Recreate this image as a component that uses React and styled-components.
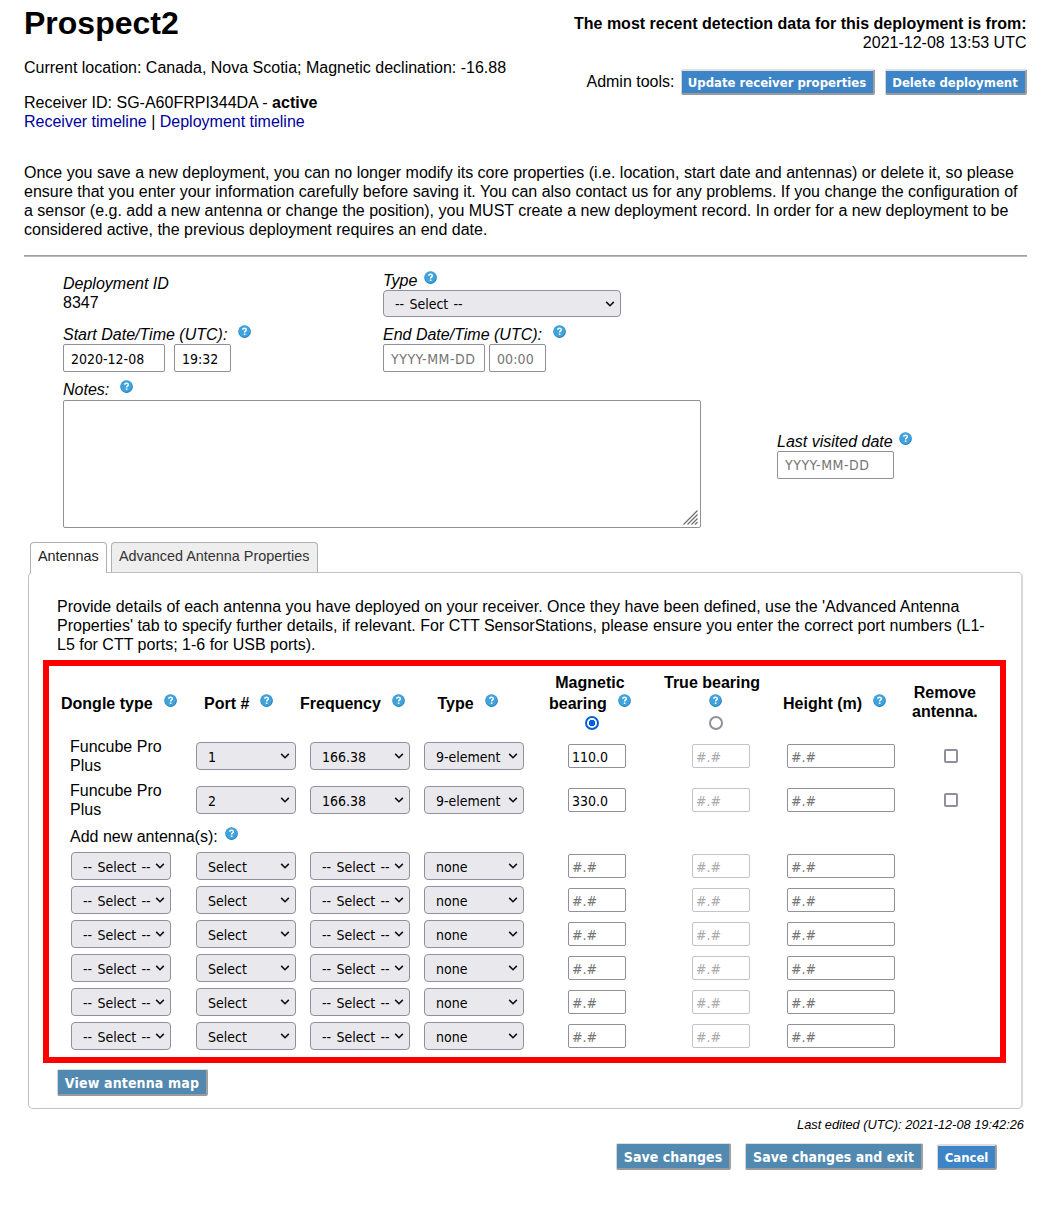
import React from "react";
import styled, { createGlobalStyle, css } from "styled-components";

const GlobalStyle = createGlobalStyle`
  * { box-sizing: border-box; }
  body {
    margin: 0;
    background: #fff;
    color: #000;
    font: 16px/19px "Liberation Sans", Arial, sans-serif;
  }
`;

const uiFont = css`
  font-family: "DejaVu Sans Condensed", "DejaVu Sans", Tahoma, sans-serif;
  font-stretch: condensed;
`;

const Page = styled.main`
  width: 1051px;
  height: 1211px;
  padding: 0 24px;
  overflow: hidden;
`;

const Header = styled.header`
  display: flex;
  justify-content: space-between;
  height: 163px;
  white-space: nowrap;
`;

const Title = styled.h1`
  margin: 5px 0 17px;
  font-size: 32px;
  line-height: 36px;
`;

const Line = styled.div`
  margin-bottom: ${(p) => p.$gap || 0}px;
`;

const Link = styled.a`
  color: #00009c;
  text-decoration: none;
`;

const Status = styled.div`
  display: flex;
  flex-direction: column;
  align-items: flex-end;
  padding: 14px 0.5px 0 0;
`;

const Tools = styled.div`
  display: flex;
  gap: 10px;
  margin-top: 17px;
`;

const ToolsLabel = styled.span`
  margin: 3px -4px 0 0;
`;

const Button = styled.button`
  ${uiFont}
  width: ${(p) => p.$w}px;
  height: ${(p) => (p.$small ? 26 : 27)}px;
  padding: ${(p) => (p.$small ? "1px 0 0" : "1px 0 0")};
  border: solid;
  border-width: ${(p) => (p.$small ? 2 : 1)}px 2px 2px 1px;
  border-color: #dedede #9f9f9f #9a9a9a #d4d4d4;
  border-radius: 2px;
  background: ${(p) => (p.$small ? "#3d85c6" : "#5289b0")};
  color: #fff;
  font-size: ${(p) => (p.$small ? 13 : 14)}px;
  font-weight: bold;
  line-height: 20px;
  letter-spacing: ${(p) => p.$ls || 0}px;
  white-space: nowrap;
`;

const Notice = styled.p`
  margin: 0;
  white-space: nowrap;
`;

const Rule = styled.hr`
  height: 2px;
  margin: 16px 0 0;
  border: 0;
  border-top: 1px solid #a0a0a0;
  border-bottom: 1px solid #b8b8b8;
`;

const Form = styled.section`
  display: grid;
  grid-template-columns: 320px 394px 1fr;
  grid-template-rows: 54px 55px 148px;
  height: 285px;
  padding: 14px 0 0 39px;
`;

const Field = styled.div`
  grid-column: ${(p) => p.$col || "auto"};
  padding-top: ${(p) => p.$top || 0}px;
`;

const Label = styled.label`
  display: flex;
  height: 19px;
  font-style: italic;
  white-space: nowrap;
`;

const Inputs = styled.div`
  display: flex;
  gap: ${(p) => p.$gap}px;
`;

const Input = styled.input`
  ${uiFont}
  width: ${(p) => p.$w}px;
  height: ${(p) => (p.$compact ? 24 : 28)}px;
  margin: 0;
  padding: ${(p) => (p.$raised ? 0 : 2)}px ${(p) => (p.$compact ? 3 : 7)}px 0;
  border: 1px solid #8f8f9d;
  border-radius: 2px;
  background: #fff;
  color: #000;
  font-size: 14px;
  letter-spacing: ${(p) => p.$ls || 0}px;
  &::placeholder { color: #757575; opacity: 1; }
  &:disabled { border-color: #c3c3cb; }
  &:disabled::placeholder { color: #ababab; }
`;

const SelectBox = styled.span`
  display: flex;
  align-items: center;
  width: ${(p) => p.$w}px;
  height: ${(p) => p.$h}px;
`;

const NativeSelect = styled.select`
  ${uiFont}
  flex: none;
  width: 100%;
  height: 100%;
  margin: 0;
  padding: 1px 0 0 11px;
  appearance: none;
  border: 1px solid #8f8f9d;
  border-radius: 4px;
  background: #e9e9ed;
  color: #000;
  font-size: 14px;
  letter-spacing: 0;
  word-spacing: 1.3px;
`;

const Chevron = styled.svg`
  flex: none;
  width: 10px;
  height: 6px;
  margin-left: -16px;
  pointer-events: none;
`;

const NotesBox = styled.div`
  position: relative;
  width: 638px;
  height: 128px;
  margin-top: 1px;
`;

const Notes = styled.textarea`
  display: block;
  width: 100%;
  height: 100%;
  border: 1px solid #8f8f9d;
  border-radius: 2px;
  resize: none;
`;

const Grip = styled.svg`
  position: absolute;
  right: 3px;
  bottom: 3px;
`;

const Tabs = styled.nav`
  display: flex;
  gap: 4px;
  height: 31px;
  margin: 0 0 -1px 6px;
  align-items: flex-start;
  position: relative;
`;

const Tab = styled.div`
  width: ${(p) => p.$w}px;
  height: ${(p) => (p.$active ? 31 : 30)}px;
  padding: 5px 0 0 7px;
  border: 1px solid #b0b0b0;
  border-bottom: 0;
  border-radius: 4px 4px 0 0;
  background: ${(p) => (p.$active ? "#fff" : "#eee")};
  color: ${(p) => (p.$active ? "#212121" : "#333")};
  font-size: 14.4px;
  line-height: 17px;
  white-space: nowrap;
`;

const Panel = styled.section`
  width: 995px;
  height: 537px;
  margin-left: 4px;
  padding: 24px 0 0 14px;
  border: 1px solid #c0c0c0;
  border-right: 2px solid #d8d8d8;
  border-radius: 5px;
`;

const PanelText = styled.p`
  margin: 0 0 6px 14px;
  white-space: nowrap;
`;

const Highlight = styled.div`
  width: 963px;
  height: 403px;
  border: 6px solid #f00;
`;

const HeadRow = styled.div`
  display: grid;
  grid-template-columns: 143px 96px 137.5px 111.5px 115px 119px 129px 1fr;
  height: 68px;
  padding: 7px 0 0 12px;
  font-weight: bold;
  white-space: nowrap;
`;

const Head = styled.div`
  display: flex;
  flex-direction: column;
  align-items: center;
  width: max-content;
  padding-top: ${(p) => p.$top || 0}px;
`;

const HeadLine = styled.div`
  display: flex;
  height: ${(p) => p.$h || 19}px;
`;

const Radio = styled.input`
  appearance: none;
  flex: none;
  width: 14px;
  height: 14px;
  margin: 3px 0 0 ${(p) => p.$left}px;
  border: 2px solid #8f8f9d;
  border-radius: 50%;
  background: #fff;
  &:checked {
    border-color: #0060df;
    background: radial-gradient(circle, #0060df 2.9px, #fff 3.5px);
  }
`;

const Row = styled.div`
  display: grid;
  grid-template-columns: 125px 114px 114px 144px 124px 95px 157px 14px;
  align-items: center;
  height: ${(p) => p.$h}px;
  padding-left: 22px;
`;

const Dongle = styled.div`
  margin: -1px 0 0 -1px;
`;

const Checkbox = styled.input`
  appearance: none;
  width: 14px;
  height: 14px;
  margin: 0;
  border: 2px solid #8f8f9d;
  border-radius: 2px;
  background: #fff;
`;

const AddLabel = styled.div`
  display: flex;
  height: 27px;
  padding: 5px 0 0 21px;
`;

const MapAction = styled.div`
  margin: 6px 0 0 14px;
`;

const Edited = styled.div`
  margin: 7px 3px 10px 0;
  font-size: 12.8px;
  font-style: italic;
  line-height: 17px;
  text-align: right;
`;

const Actions = styled.footer`
  display: flex;
  justify-content: flex-end;
  align-items: flex-end;
  gap: 14px;
  padding-right: 30px;
`;

const HelpSvg = styled.svg`
  flex: none;
  display: block;
  width: 13px;
  height: 13px;
  margin-left: ${(p) => p.$left}px;
`;

function Help({ left = 0 }) {
  return (
    <HelpSvg viewBox="0 0 13 13" $left={left}>
      <circle cx="6.5" cy="6.5" r="6.4" fill="#8ec6e6" />
      <circle cx="6.6" cy="6.8" r="6.1" fill="#2579b5" />
      <circle cx="6.4" cy="6.3" r="5.7" fill="#3fa4dc" />
      <path d="M4.7 4.8C4.7 2.6 8.3 2.6 8.3 4.7C8.3 5.9 6.6 6 6.6 7.5" fill="none" stroke="#fff" strokeWidth="1.5" />
      <rect x="5.8" y="8.5" width="1.6" height="1.5" fill="#fff" />
    </HelpSvg>
  );
}

function Select({ value, w = 100, h = 28 }) {
  return (
    <SelectBox $w={w} $h={h}>
      <NativeSelect defaultValue={value}>
        <option>{value}</option>
      </NativeSelect>
      <Chevron viewBox="0 0 10 6">
        <path d="M1.2 0.9L5 4.7L8.8 0.9" fill="none" stroke="#111" strokeWidth="1.6" />
      </Chevron>
    </SelectBox>
  );
}

function AntennaRow({ h, name, port, frequency, type, bearing, removable }) {
  return (
    <Row $h={h}>
      {name || <Select value="-- Select --" />}
      <Select value={port} />
      <Select value={frequency} />
      <Select value={type} />
      <Input $compact $w={58} defaultValue={bearing} placeholder="#.#" />
      <Input $compact $w={58} disabled placeholder="#.#" />
      <Input $compact $w={108} placeholder="#.#" />
      {removable && <Checkbox type="checkbox" />}
    </Row>
  );
}

const antennas = [
  { port: "1", bearing: "110.0" },
  { port: "2", bearing: "330.0" },
];

export default function App() {
  return (
    <Page>
      <GlobalStyle />
      <Header>
        <div>
          <Title>Prospect2</Title>
          <Line $gap={16}>Current location: Canada, Nova Scotia; Magnetic declination: -16.88</Line>
          <Line>Receiver ID: SG-A60FRPI344DA - <b>active</b></Line>
          <Line><Link>Receiver timeline</Link> | <Link>Deployment timeline</Link></Line>
        </div>
        <Status>
          <b>The most recent detection data for this deployment is from:</b>
          <Line>2021-12-08 13:53 UTC</Line>
          <Tools>
            <ToolsLabel>Admin tools:</ToolsLabel>
            <Button $small $w={194}>Update receiver properties</Button>
            <Button $small $w={142}>Delete deployment</Button>
          </Tools>
        </Status>
      </Header>

      <Notice>
        Once you save a new deployment, you can no longer modify its core properties (i.e. location, start date and antennas) or delete it, so please<br />
        ensure that you enter your information carefully before saving it. You can also contact us for any problems. If you change the configuration of<br />
        a sensor (e.g. add a new antenna or change the position), you MUST create a new deployment record. In order for a new deployment to be<br />
        considered active, the previous deployment requires an end date.
      </Notice>
      <Rule />

      <Form>
        <Field $top={3}>
          <Label>Deployment ID</Label>
          <div>8347</div>
        </Field>
        <Field $col="2 / 4">
          <Label>Type <Help left={7} /></Label>
          <Select value="-- Select --" w={238} h={27} />
        </Field>
        <Field $col="1">
          <Label>Start Date/Time (UTC): <Help left={11} /></Label>
          <Inputs $gap={9}>
            <Input $w={102} defaultValue="2020-12-08" />
            <Input $w={57} defaultValue="19:32" />
          </Inputs>
        </Field>
        <Field $col="2 / 4">
          <Label>End Date/Time (UTC): <Help left={11} /></Label>
          <Inputs $gap={4}>
            <Input $w={102} $ls={0.5} placeholder="YYYY-MM-DD" />
            <Input $w={57} $ls={0.1} placeholder="00:00" />
          </Inputs>
        </Field>
        <Field $col="1 / 3">
          <Label>Notes: <Help left={11} /></Label>
          <NotesBox>
            <Notes />
            <Grip width="15" height="15" viewBox="0 0 15 15">
              <path d="M0.5 14.5L14.5 0.5M4.5 14.5L14.5 4.5M8.5 14.5L14.5 8.5M12 14.5L14.5 12" stroke="#6c6c6c" strokeWidth="1.2" />
            </Grip>
          </NotesBox>
        </Field>
        <Field $col="3" $top={52}>
          <Label>Last visited date <Help left={6} /></Label>
          <Input $raised $w={117} $ls={0.5} placeholder="YYYY-MM-DD" />
        </Field>
      </Form>

      <Tabs>
        <Tab $active $w={77}>Antennas</Tab>
        <Tab $w={207}>Advanced Antenna Properties</Tab>
      </Tabs>
      <Panel>
        <PanelText>
          Provide details of each antenna you have deployed on your receiver. Once they have been defined, use the 'Advanced Antenna<br />
          Properties' tab to specify further details, if relevant. For CTT SensorStations, please ensure you enter the correct port numbers (L1-<br />
          L5 for CTT ports; 1-6 for USB ports).
        </PanelText>
        <Highlight>
          <HeadRow>
            <Head $top={21}><HeadLine>Dongle type <Help left={11} /></HeadLine></Head>
            <Head $top={21}><HeadLine>Port # <Help left={11} /></HeadLine></Head>
            <Head $top={21}><HeadLine>Frequency <Help left={11} /></HeadLine></Head>
            <Head $top={21}><HeadLine>Type <Help left={11} /></HeadLine></Head>
            <Head>
              <HeadLine $h={21}>Magnetic</HeadLine>
              <HeadLine>bearing <Help left={11} /></HeadLine>
              <Radio $left={4} type="radio" name="bearing" defaultChecked />
            </Head>
            <Head>
              <HeadLine $h={21}>True bearing</HeadLine>
              <HeadLine><Help left={7} /></HeadLine>
              <Radio $left={8} type="radio" name="bearing" />
            </Head>
            <Head $top={21}><HeadLine>Height (m) <Help left={11} /></HeadLine></Head>
            <Head $top={10}>
              <HeadLine>Remove</HeadLine>
              <HeadLine>antenna.</HeadLine>
            </Head>
          </HeadRow>
          {antennas.map((a) => (
            <AntennaRow
              key={a.port}
              h={44}
              name={<Dongle>Funcube Pro<br />Plus</Dongle>}
              port={a.port}
              frequency="166.38"
              type="9-element"
              bearing={a.bearing}
              removable
            />
          ))}
          <AddLabel>Add new antenna(s): <Help left={7} /></AddLabel>
          {[0, 1, 2, 3, 4, 5].map((i) => (
            <AntennaRow key={i} h={34} port="Select" frequency="-- Select --" type="none" />
          ))}
        </Highlight>
        <MapAction><Button $w={151} $ls={0.15}>View antenna map</Button></MapAction>
      </Panel>
      <Edited>Last edited (UTC): 2021-12-08 19:42:26</Edited>
      <Actions>
        <Button $w={115} $ls={0.07}>Save changes</Button>
        <Button $w={178} $ls={0.05}>Save changes and exit</Button>
        <Button $small $w={60}>Cancel</Button>
      </Actions>
    </Page>
  );
}
